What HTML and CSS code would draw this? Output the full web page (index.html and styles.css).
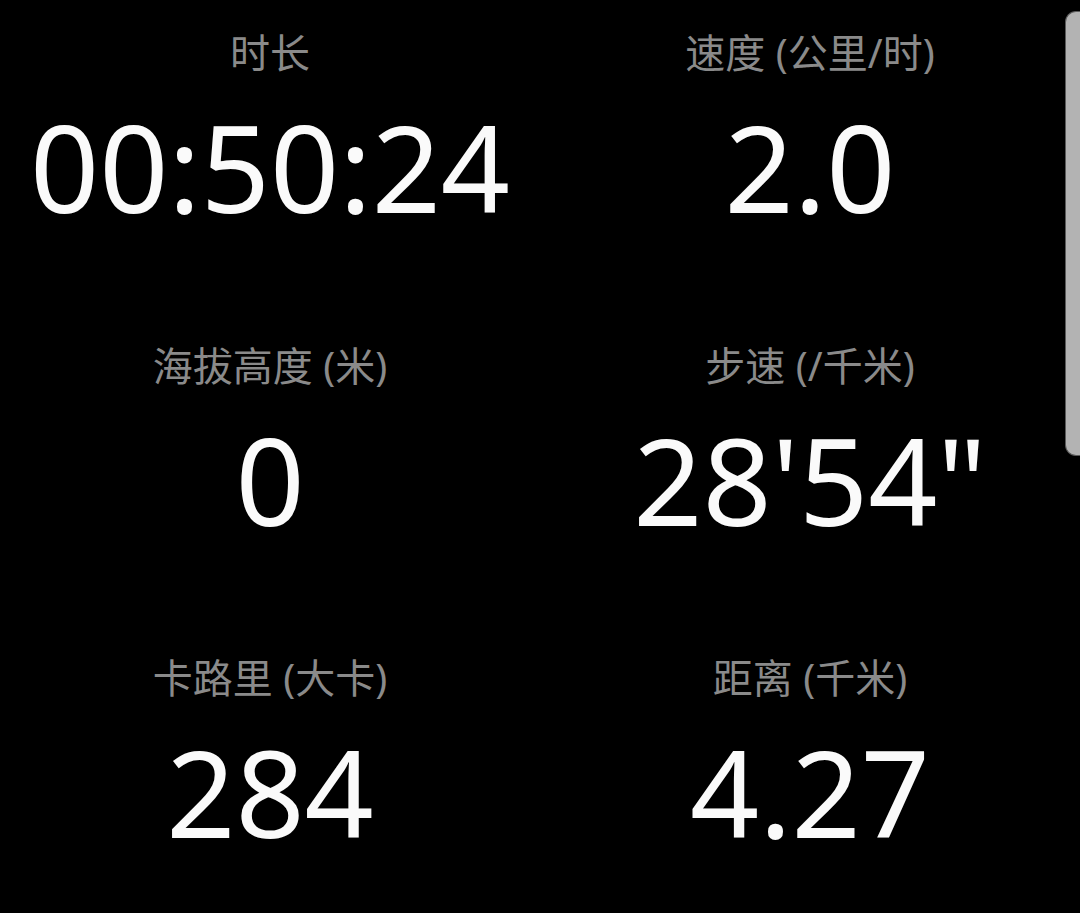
FILE: index.html
```html
<!DOCTYPE html>
<html lang="zh-CN">
<head>
<meta charset="utf-8">
<title>运动数据</title>
<link rel="stylesheet" href="styles.css">
</head>
<body>
<main class="stats">
  <div class="cell"><div class="label">时长</div><div class="value">00:50:24</div></div>
  <div class="cell"><div class="label">速度 (公里/时)</div><div class="value">2.0</div></div>
  <div class="cell"><div class="label">海拔高度 (米)</div><div class="value">0</div></div>
  <div class="cell"><div class="label">步速 (/千米)</div><div class="value">28'54"</div></div>
  <div class="cell"><div class="label">卡路里 (大卡)</div><div class="value">284</div></div>
  <div class="cell"><div class="label">距离 (千米)</div><div class="value">4.27</div></div>
</main>
<div class="scrollbar"></div>
</body>
</html>
```
FILE: styles.css
```css
html, body {
  margin: 0;
  padding: 0;
  background: #000;
  height: 100%;
  overflow: hidden;
}
body {
  font-family: "Noto Sans", "Noto Sans CJK SC", sans-serif;
  position: relative;
}
.stats {
  display: grid;
  grid-template-columns: 540px 540px;
  grid-auto-rows: 312.5px;
}
.cell {
  display: flex;
  flex-direction: column;
  align-items: center;
  padding-top: 28px;
}
.label {
  color: #8a8a8a;
  font-size: 40px;
  line-height: 50px;
  white-space: nowrap;
}
.value {
  color: #fafafa;
  font-size: 121px;
  line-height: 130px;
  margin-top: 23px;
  white-space: nowrap;
}
.scrollbar {
  position: absolute;
  top: 11px;
  right: 0;
  width: 14px;
  height: 443px;
  background: #b3b3b3;
  border: 1px solid #5a5a5a;
  border-right: none;
  border-radius: 11px 0 0 11px;
}
```
